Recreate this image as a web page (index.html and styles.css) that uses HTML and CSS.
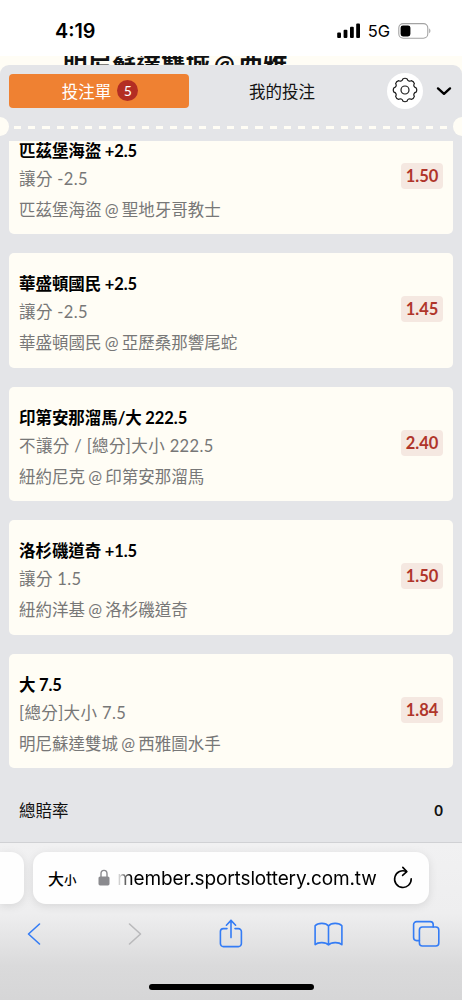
FILE: index.html
```html
<!DOCTYPE html>
<html lang="zh-Hant">
<head>
    <meta charset="UTF-8">
    <title>投注單</title>
    <meta name="viewport" content="width=device-width, initial-scale=1.0">
    <link rel="stylesheet" href="styles.css">
</head>
<body>
    <div class="statusBar">
        <span class="time">4:19</span>
        <div class="statusIcons">
            <svg width="24" height="16" viewBox="0 0 24 16">
                <rect x="0.2" y="9.4" width="3.8" height="5.6" rx="1"/>
                <rect x="6.6" y="6.8" width="3.8" height="8.2" rx="1"/>
                <rect x="13" y="3.7" width="3.8" height="11.3" rx="1"/>
                <rect x="19.2" y="0.4" width="3.8" height="14.6" rx="1"/>
            </svg>
            <span class="network">5G</span>
            <svg width="34" height="16" viewBox="0 0 34 16">
                <rect x="0.8" y="0.6" width="29" height="14.6" rx="4.4" fill="none" stroke="#a3a3a3" stroke-width="1.1"/>
                <rect x="2.6" y="2.4" width="9.8" height="11" rx="2.4"/>
                <path d="M31.2 5.6c1.6.6 1.6 4 0 4.6z" fill="#a3a3a3"/>
            </svg>
        </div>
    </div>
    <div class="pageBehind">
        <div class="behindTitle">明尼蘇達雙城 @ 西雅</div>
    </div>
    <div class="betslip">
        <div class="tabs">
            <div class="tab active">投注單 <span class="count">5</span></div>
            <div class="tab">我的投注</div>
            <div class="settings">
                <svg width="26" height="26" viewBox="0 0 26 26" fill="none" stroke="#1b1b1b" stroke-width="1.2" stroke-linejoin="round">
                    <path d="M10.84 1.91Q13 .6 15.16 1.91A2.6 2.6 0 0 0 19.32 3.63Q21.77 4.23 22.37 6.68A2.6 2.6 0 0 0 24.09 10.84Q25.4 13 24.09 15.16A2.6 2.6 0 0 0 22.37 19.32Q21.77 21.77 19.32 22.37A2.6 2.6 0 0 0 15.16 24.09Q13 25.4 10.84 24.09A2.6 2.6 0 0 0 6.68 22.37Q4.23 21.77 3.63 19.32A2.6 2.6 0 0 0 1.91 15.16Q.6 13 1.91 10.84A2.6 2.6 0 0 0 3.63 6.68Q4.23 4.23 6.68 3.63A2.6 2.6 0 0 0 10.84 1.91z"/>
                    <circle cx="13" cy="13" r="4"/>
                </svg>
            </div>
            <svg class="chevron" width="16" height="10" viewBox="0 0 16 10" fill="none" stroke="#000" stroke-width="2.4" stroke-linecap="round" stroke-linejoin="round">
                <path d="M2 2.4l6 5.4 6-5.4"/>
            </svg>
        </div>
        <div class="divider">
            <span class="notch"></span>
            <span class="dashes"></span>
            <span class="notch"></span>
        </div>
        <div class="betList">
            <div class="bet">
                <div class="betInfo">
                    <div class="pick">匹茲堡海盜 +2.5</div>
                    <div class="market">讓分 -2.5</div>
                    <div class="match">匹茲堡海盜 @ 聖地牙哥教士</div>
                </div>
                <span class="odds">1.50</span>
            </div>
            <div class="bet">
                <div class="betInfo">
                    <div class="pick">華盛頓國民 +2.5</div>
                    <div class="market">讓分 -2.5</div>
                    <div class="match">華盛頓國民 @ 亞歷桑那響尾蛇</div>
                </div>
                <span class="odds">1.45</span>
            </div>
            <div class="bet">
                <div class="betInfo">
                    <div class="pick">印第安那溜馬/大 222.5</div>
                    <div class="market">不讓分 / [總分]大小 222.5</div>
                    <div class="match">紐約尼克 @ 印第安那溜馬</div>
                </div>
                <span class="odds">2.40</span>
            </div>
            <div class="bet">
                <div class="betInfo">
                    <div class="pick">洛杉磯道奇 +1.5</div>
                    <div class="market">讓分 1.5</div>
                    <div class="match">紐約洋基 @ 洛杉磯道奇</div>
                </div>
                <span class="odds">1.50</span>
            </div>
            <div class="bet">
                <div class="betInfo">
                    <div class="pick">大 7.5</div>
                    <div class="market">[總分]大小 7.5</div>
                    <div class="match">明尼蘇達雙城 @ 西雅圖水手</div>
                </div>
                <span class="odds">1.84</span>
            </div>
        </div>
        <div class="total">
            <span>總賠率</span>
            <span class="totalValue">0</span>
        </div>
    </div>
    <div class="browserBar">
        <div class="addressRow">
            <div class="prevTab"></div>
            <div class="address">
                <span class="textSize">大<small>小</small></span>
                <svg class="lock" width="12" height="18" viewBox="0 0 12 18">
                    <path d="M3 8V4.8a3 3.4 0 0 1 6 0V8" fill="none" stroke="#8a8a8e" stroke-width="1.4"/>
                    <rect x="0.5" y="7.4" width="11" height="9" rx="1.6" fill="#8a8a8e"/>
                </svg>
                <span class="url">member.sportslottery.com.tw</span>
                <svg class="reload" width="20" height="24" viewBox="0 0 20 24" fill="none" stroke="#000" stroke-width="1.6" stroke-linecap="round" stroke-linejoin="round">
                    <path d="M13.4 5.6A8.3 8.3 0 1 0 18.2 12.8"/>
                    <path d="M9.8 1.4l4 4.2-4.2 3.8"/>
                </svg>
            </div>
        </div>
        <div class="toolbar">
            <svg width="28" height="30" viewBox="0 0 28 30"><path d="M19.5 5L8.5 15l11 10"/></svg>
            <svg class="disabled" width="28" height="30" viewBox="0 0 28 30"><path d="M11.5 5l11 10-11 10"/></svg>
            <svg width="28" height="30" viewBox="0 0 28 30">
                <path d="M12 9.6H8.400a3 3 0 0 0-3 3v12a3 3 0 0 0 3 3h15a3 3 0 0 0 3-3v-12a3 3 0 0 0-3-3H20"/>
                <path d="M16 18.6V1.4M11.400 6.2L16 1.4l4.600 4.800"/>
            </svg>
            <svg width="30" height="30" viewBox="0 0 30 30">
                <path d="M15.500 7C12.900 3.600 5.100 3.400 2.100 6.800v18.800c3-2.800 10.800-2.600 13.400.4 2.600-3 10.400-3.200 13.400-.4V6.800C25.900 3.400 18.100 3.600 15.500 7zv19"/>
            </svg>
            <svg width="28" height="30" viewBox="0 0 28 30">
                <path d="M7.400 21.600H4.600a3 3 0 0 1-3-3v-13a3 3 0 0 1 3-3h13.600a3 3 0 0 1 3 3V8"/>
                <rect x="7.400" y="8" width="19.400" height="19" rx="3"/>
            </svg>
        </div>
        <div class="homeIndicator"></div>
    </div>
</body>
</html>
```
FILE: styles.css
```css
body {
    margin: 0;
    height: 1000px;
    display: flex;
    flex-direction: column;
    overflow: hidden;
    background: #fffdf5;
    font-family: Lato, "Noto Sans CJK TC", sans-serif;
    font-size: 16.5px;
    color: #111;
}
svg {
    display: block;
    flex-shrink: 0;
}
.statusBar {
    height: 56px;
    flex-shrink: 0;
    box-sizing: border-box;
    padding: 6px 30px 0 55px;
    display: flex;
    align-items: center;
    justify-content: space-between;
    background: #fff;
    font-family: Inter, sans-serif;
    color: #000;
}
.time {
    font-size: 19.8px;
    font-weight: 600;
}
.statusIcons {
    display: flex;
    align-items: center;
}
.network {
    margin: 0 8px 0 7px;
    font-size: 16.5px;
    font-weight: 400;
}
.pageBehind {
    height: 9px;
    flex-shrink: 0;
    overflow: hidden;
    padding-left: 63px;
}
.behindTitle {
    margin-top: -7px;
    font-size: 24.5px;
    line-height: 30px;
    font-weight: bold;
    word-spacing: -2px;
}
.betslip {
    height: 777px;
    flex-shrink: 0;
    display: flex;
    flex-direction: column;
    background: #e4e5e8;
    border-radius: 9px 9px 0 0;
}
.tabs {
    display: flex;
    align-items: center;
    height: 52px;
    padding: 0 10px 0 9px;
}
.tab {
    width: 180px;
    height: 34px;
    margin-right: 3px;
    box-sizing: border-box;
    padding-bottom: 1px;
    display: flex;
    align-items: center;
    justify-content: center;
}
.tab.active {
    padding-left: 2px;
    background: #ef8132;
    border-radius: 4px;
    color: #fff;
}
.count {
    width: 21px;
    height: 21px;
    margin-left: 6px;
    border-radius: 50%;
    background: #b32d23;
    font-size: 14px;
    line-height: 21px;
    text-align: center;
}
.settings {
    width: 36px;
    height: 36px;
    margin-left: 12px;
    display: flex;
    align-items: center;
    justify-content: center;
    border-radius: 50%;
    background: #fff;
}
.settings svg {
    margin-bottom: 2px;
}
.chevron {
    margin-left: 13px;
}
.divider {
    height: 19px;
    display: flex;
    align-items: center;
    justify-content: space-between;
    margin: 0 -9px;
}
.notch {
    width: 18px;
    height: 19px;
    border-radius: 50%;
    background: #fffdf5;
}
.dashes {
    flex: 1;
    height: 3px;
    margin: 2px 4px 0 5px;
    background: repeating-linear-gradient(90deg, #fffdf5 0, #fffdf5 7.2px, transparent 7.2px, transparent 14.2px);
}
.betList {
    height: 648px;
    margin-top: 4.5px;
    padding: 0 9.5px 0 9px;
    overflow: hidden;
}
.bet {
    height: 114.6px;
    margin-bottom: 19px;
    box-sizing: border-box;
    padding: 17px 9.5px 0 10px;
    display: flex;
    justify-content: space-between;
    background: #fffdf5;
    border-radius: 5px;
}
.bet:first-child {
    margin-top: -21px;
}
.pick {
    line-height: 28px;
    font-weight: bold;
    letter-spacing: -0.05px;
    word-spacing: -0.5px;
    color: #000;
}
.market {
    padding-top: 1px;
    line-height: 26px;
    letter-spacing: 0.38px;
    color: #777;
}
.match {
    line-height: 36px;
    word-spacing: -1px;
    color: #777;
}
.odds {
    width: 42px;
    height: 26px;
    margin-top: 26px;
    border-radius: 4px;
    background: #f5e8e1;
    color: #b0352a;
    font-weight: bold;
    line-height: 26px;
    text-align: center;
}
.total {
    display: flex;
    align-items: center;
    justify-content: space-between;
    height: 42px;
    padding: 0 19px 0 19px;
}
.totalValue {
    font-size: 15px;
    font-weight: bold;
}
.browserBar {
    height: 158px;
    flex-shrink: 0;
    box-sizing: border-box;
    border-top: 1px solid #d0d1d4;
    background: linear-gradient(#f1f1f2 0%, #eeeeef 45%, #dadadb 78%, #d6d6d7 100%);
}
.addressRow {
    display: flex;
    gap: 9px;
    padding-top: 9px;
}
.prevTab, .address {
    height: 52px;
    background: #fefefe;
    box-shadow: 0 2px 10px rgba(0, 0, 0, 0.1);
}
.prevTab {
    width: 24px;
    border-radius: 0 13px 13px 0;
}
.address {
    width: 396px;
    box-sizing: border-box;
    padding: 0 16px 0 15px;
    display: flex;
    align-items: center;
    border-radius: 13px;
    color: #000;
}
.textSize {
    width: 50px;
    font-size: 16px;
    font-weight: 500;
    white-space: nowrap;
}
.textSize small {
    font-size: 12.5px;
}
.url {
    margin-left: 7px;
    font-family: Inter, sans-serif;
    font-size: 19px;
    letter-spacing: -0.13px;
    -webkit-mask-image: linear-gradient(90deg, transparent 0, #000 14px);
    mask-image: linear-gradient(90deg, transparent 0, #000 14px);
}
.reload {
    margin-left: auto;
}
.toolbar {
    display: flex;
    justify-content: space-between;
    padding: 15px 22px 0 20px;
}
.toolbar svg {
    fill: none;
    stroke: #347cf5;
    stroke-width: 1.6;
    stroke-linecap: round;
    stroke-linejoin: round;
}
.toolbar .disabled {
    stroke: #b9b9bb;
}
.homeIndicator {
    width: 165px;
    height: 6px;
    margin: 35px auto 0;
    border-radius: 3px;
    background: #000;
}
```
